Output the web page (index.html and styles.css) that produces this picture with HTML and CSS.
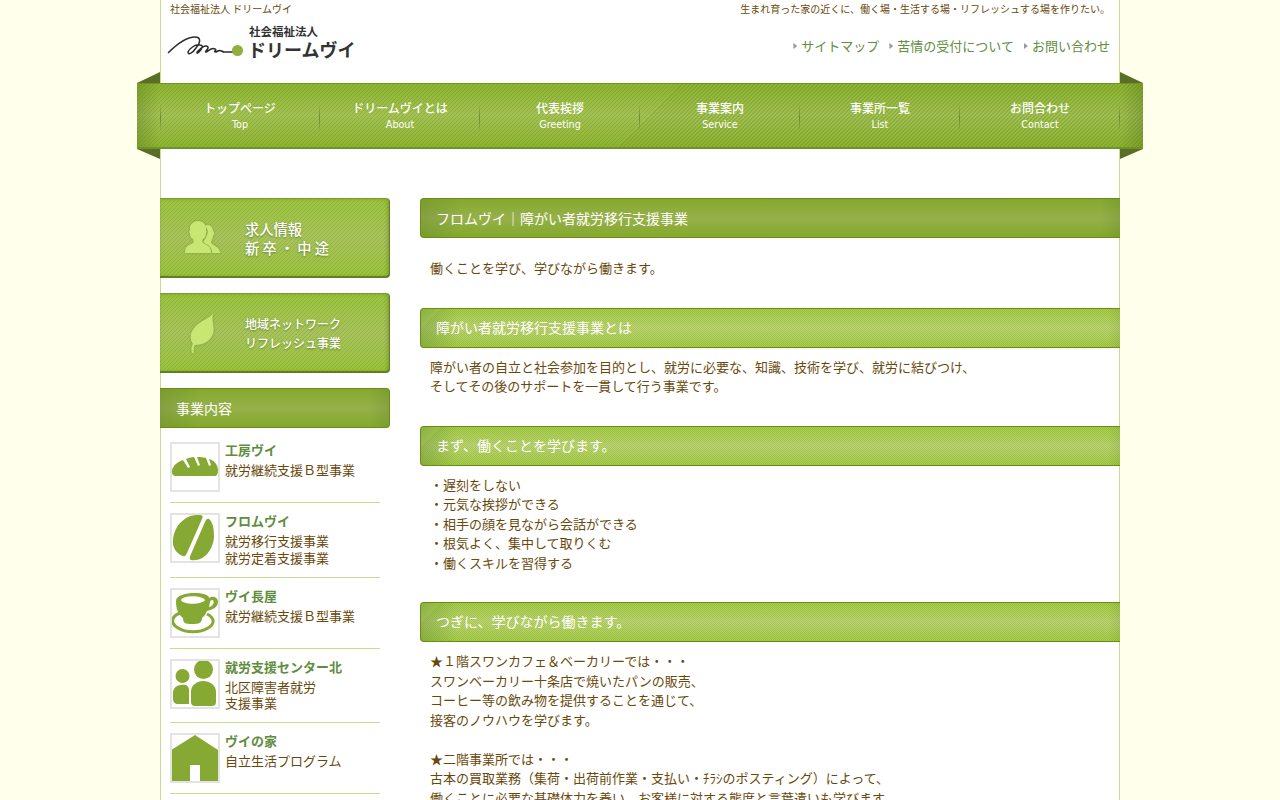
FILE: index.html
```html
<!DOCTYPE html>
<html lang="ja">
<head>
  <meta charset="UTF-8">
  <title>フロムヴイ｜社会福祉法人 ドリームヴイ</title>
  <meta name="viewport" content="width=device-width, initial-scale=1.0">
  <link rel="stylesheet" href="styles.css">
</head>
<body>
  <div class="wrapper">
    <header class="header">
      <div class="header-top">
        <h1>社会福祉法人 ドリームヴイ</h1>
        <p>生まれ育った家の近くに、働く場・生活する場・リフレッシュする場を作りたい。</p>
      </div>
      <div class="header-main">
        <a href="#" class="logo">
          <svg class="logo-mark" width="78" height="24" viewBox="0 0 78 24">
            <path d="M1 17C10 8 20 1 28 1c6 0 6 5 1 11c-4 6-8 7-8 4c1-3 7-8 12-7c4 0 2 4-1 7c-2 2-3 1-1-1c4-4 8-6 10-4c1 2-4 5-2 5c3-1 5-5 9-3c3 1-3 3 1 3c5-3 4-1 8 0h10" fill="none" stroke="#2b2b2b" stroke-width="1.5"/>
            <circle cx="70.500" cy="14.500" r="5.500" fill="#8db13c"/>
          </svg>
          <span class="logo-text">
            <small>社会福祉法人</small>
            <strong>ドリームヴイ</strong>
          </span>
        </a>
        <ul class="sub-nav">
          <li><a href="#">サイトマップ</a></li>
          <li><a href="#">苦情の受付について</a></li>
          <li><a href="#">お問い合わせ</a></li>
        </ul>
      </div>
    </header>

    <nav class="ribbon">
      <ul>
        <li><a href="#">トップページ<span>Top</span></a></li>
        <li><a href="#">ドリームヴイとは<span>About</span></a></li>
        <li><a href="#">代表挨拶<span>Greeting</span></a></li>
        <li><a href="#">事業案内<span>Service</span></a></li>
        <li><a href="#">事業所一覧<span>List</span></a></li>
        <li><a href="#">お問合わせ<span>Contact</span></a></li>
      </ul>
    </nav>

    <div class="columns">
      <aside class="side">
        <a href="#" class="banner">
          <svg width="36" height="34" viewBox="0 0 36 34">
            <path d="M20 5c2-2 8-1 8 5c2 1 1 4 0 5c0 3-2 4-2 6c0 3 8 4 9 10v1h-8c0-5-2-7-6-9c-3-1-3-3-1-5c3-4 4-9 0-13z"/>
            <path d="M0 32c0-6 2-7 6-9c3-1 3-3 2-5c-2-1-3-3-3-5c-1-2-1-3 0-4C4 4 8 0 13 0s9 4 8 9c1 1 0 3 0 4c0 2-1 4-3 5c-1 2-1 4 2 5c4 2 6 3 6 9z"/>
          </svg>
          <span class="banner-text">求人情報<br><span class="wide">新卒・中途</span></span>
        </a>
        <a href="#" class="banner">
          <svg width="36" height="42" viewBox="0 0 36 42">
            <path d="M28 1c-2 5-12 7-18 14c-6 6-5 13-2 17c-2 3-2 6-1 9h2c-1-3 0-6 1-8c7 0 14-3 17-9c4-7-1-14 1-23z"/>
          </svg>
          <span class="banner-text small">地域ネットワーク<br>リフレッシュ事業</span>
        </a>

        <h2 class="bar side-title">事業内容</h2>
        <ul class="services">
          <li>
            <svg class="icon" viewBox="0 0 46 46">
              <path d="M3 32c-4-1-4-6-1-10c2-3 6-5 9-6l5 8l2-1l-4-8c3-1 5-2 8-2l4 9l2-1l-3-8c3 0 6 0 9 1l3 8l2-1l-2-6c5 1 9 6 9 11c0 4-1 6-4 6z"/>
            </svg>
            <div><h3>工房ヴイ</h3><p>就労継続支援Ｂ型事業</p></div>
          </li>
          <li>
            <svg class="icon" viewBox="0 0 46 46">
              <path d="M28 0C12-1 2 12 1 25c-1 8 4 14 10 16c2 1 3-1 4-3L30 4c1-2 1-4-2-4zM37 4c-2-1-3 1-4 3L19 39c-1 2-2 5 0 6c12 2 22-9 23-23c0-8-1-15-5-18z"/>
            </svg>
            <div><h3>フロムヴイ</h3><p>就労移行支援事業<br>就労定着支援事業</p></div>
          </li>
          <li>
            <svg class="icon" viewBox="0 0 46 46">
              <path fill-rule="evenodd" d="M4 11C4 1 37 1 37 8c5-3 9 0 9 4c0 6-7 8-11 9c-1 3-3 5-5 7c0 5-3 6-10 6s-9-1-9-6c-5-4-7-9-7-17zm5-1c2 5 21 5 24 0c-3-5-22-5-24 0zm29 2l-1 5c5-1 6-7 3-7c-1 0-2 1-2 2z"/>
              <path d="M8 23C-2 27-1 34 6 38c8 5 22 5 30 0c7-4 7-10-1-14" fill="none" stroke="#86a934" stroke-width="3"/>
            </svg>
            <div><h3>ヴイ長屋</h3><p>就労継続支援Ｂ型事業</p></div>
          </li>
          <li>
            <svg class="icon" viewBox="0 0 46 46">
              <circle cx="10.500" cy="15" r="7"/>
              <circle cx="31.500" cy="8.500" r="9.500"/>
              <path d="M9 24c5-1 8 1 8 5v14H6c-3 0-5-2-5-5v-6c0-4 3-8 8-8zM31 20c7 0 13 4 13 11v10c0 3-2 4-4 4H23c-2 0-4-1-4-4V31c0-7 6-11 12-11z"/>
            </svg>
            <div><h3>就労支援センター北</h3><p>北区障害者就労<br>支援事業</p></div>
          </li>
          <li>
            <svg class="icon" viewBox="0 0 46 46">
              <path d="M23 0L46 15v31H28V30H18v16H-1V15z"/>
            </svg>
            <div><h3>ヴイの家</h3><p>自立生活プログラム</p></div>
          </li>
        </ul>
      </aside>

      <main class="main">
        <section class="intro">
          <h2 class="bar">フロムヴイ｜障がい者就労移行支援事業</h2>
          <p>働くことを学び、学びながら働きます。</p>
        </section>
        <section>
          <h3 class="bar light">障がい者就労移行支援事業とは</h3>
          <p>障がい者の自立と社会参加を目的とし、就労に必要な、知識、技術を学び、就労に結びつけ、<br>
          そしてその後のサポートを一貫して行う事業です。</p>
        </section>
        <section>
          <h3 class="bar light">まず、働くことを学びます。</h3>
          <p>・遅刻をしない<br>
          ・元気な挨拶ができる<br>
          ・相手の顔を見ながら会話ができる<br>
          ・根気よく、集中して取りくむ<br>
          ・働くスキルを習得する</p>
        </section>
        <section>
          <h3 class="bar light">つぎに、学びながら働きます。</h3>
          <p>★１階スワンカフェ＆ベーカリーでは・・・<br>
          スワンベーカリー十条店で焼いたパンの販売、<br>
          コーヒー等の飲み物を提供することを通じて、<br>
          接客のノウハウを学びます。<br>
          <br>
          ★二階事業所では・・・<br>
          古本の買取業務（集荷・出荷前作業・支払い・ﾁﾗｼのポスティング）によって、<br>
          働くことに必要な基礎体力を養い、お客様に対する態度と言葉遣いも学びます。</p>
        </section>
      </main>
    </div>
  </div>
</body>
</html>
```
FILE: styles.css
```css
* {
  margin: 0;
  padding: 0;
  box-sizing: border-box;
}

body {
  background: #ffffec;
  color: #69490b;
  font-family: 'Noto Sans CJK JP', sans-serif;
  font-size: 13px;
  line-height: 1.5;
}

ul {
  list-style: none;
}

a {
  color: #5f8d3e;
  text-decoration: none;
}

.wrapper {
  width: 960px;
  min-height: 800px;
  margin: 0 auto;
  background: #fff;
  box-shadow: inset 1px 0 #c8dc94, inset -1px 0 #c8dc94;
}

/* header */
.header {
  height: 83px;
  padding: 0 10px;
}

.header-top {
  display: flex;
  justify-content: space-between;
  height: 24px;
  padding-top: 1px;
  font-size: 10px;
}

.header-top h1 {
  font-size: 10px;
  font-weight: normal;
}

.header-main {
  display: flex;
  justify-content: space-between;
}

.logo {
  display: flex;
  margin-left: -3px;
  color: #333;
}

.logo-mark {
  margin-top: 12px;
}

.logo-text {
  display: flex;
  flex-direction: column;
  margin-left: 3px;
}

.logo-text small {
  font-size: 11.5px;
  font-weight: bold;
  line-height: 14px;
  margin-left: 1px;
}

.logo-text strong {
  font-size: 18px;
  line-height: 22px;
}

.sub-nav {
  display: flex;
  gap: 10px;
  padding-top: 12px;
}

.sub-nav li {
  display: flex;
  align-items: center;
  height: 20px;
}

.sub-nav li::before {
  content: "";
  width: 4px;
  height: 6px;
  margin-right: 4px;
  background: #9a9a9a;
  clip-path: polygon(0 0, 100% 50%, 0 100%);
}

/* ribbon navigation */
.ribbon {
  position: relative;
  height: 66px;
  margin: 0 -23px;
  padding: 0 23px;
  border-top: 1px solid #729423;
  border-bottom: 2px solid #70922b;
  background:
    linear-gradient(90deg, rgba(85, 115, 35, .35), transparent 22px, transparent calc(100% - 22px), rgba(85, 115, 35, .35)),
    repeating-linear-gradient(135deg, rgba(92, 128, 24, .28) 0 1.2px, transparent 1.2px 2.83px),
    linear-gradient(#8db42f, #a4c154 50%, #8db42f);
}

.ribbon::before,
.ribbon::after {
  content: "";
  position: absolute;
  top: -12px;
  width: 23px;
  height: 88px;
  background: #596f27;
}

.ribbon::before {
  left: 0;
  clip-path: polygon(0 11px, 100% 0, 100% 11px, 0 11px, 0 77px, 100% 77px, 100% 87px, 0 77px);
}

.ribbon::after {
  right: 0;
  clip-path: polygon(0 0, 100% 11px, 0 11px, 0 77px, 100% 77px, 0 87px, 0 77px, 0 11px);
}

.ribbon ul {
  display: flex;
  height: 100%;
}

.ribbon li {
  width: 160px;
  padding-top: 15px;
  text-align: center;
  background: linear-gradient(transparent, #6b8a2c 50%, transparent) right 20px / 1px 28px no-repeat;
}

.ribbon li:first-child {
  background:
    linear-gradient(transparent, #6b8a2c 50%, transparent) right 20px / 1px 28px no-repeat,
    linear-gradient(transparent, #6b8a2c 50%, transparent) left 20px / 1px 28px no-repeat;
}

.ribbon a {
  display: block;
  color: #fff;
  font-size: 12px;
  font-weight: 500;
  line-height: 18px;
}

.ribbon span {
  display: block;
  font-family: 'DejaVu Sans', sans-serif;
  font-size: 9.6px;
  line-height: 16px;
}

/* columns */
.columns {
  display: flex;
  gap: 30px;
  padding-top: 49px;
}

.bar {
  height: 40px;
  padding-left: 15px;
  border: 1px solid #6c8d13;
  border-right: 0;
  border-radius: 4px 0 0 4px;
  background:
    linear-gradient(90deg, rgba(95, 125, 45, .3), transparent 40px, transparent calc(100% - 20px), rgba(95, 125, 45, .25)),
    linear-gradient(#84a92e, #96b04a 50%, #83a92b);
  color: #fff;
  font-size: 14px;
  font-weight: normal;
  line-height: 38px;
}

.bar.light {
  line-height: 36px;
  background:
    linear-gradient(90deg, rgba(85, 130, 40, .35), transparent 36px, transparent calc(100% - 12px), rgba(85, 130, 40, .15)),
    repeating-linear-gradient(135deg, rgba(115, 155, 30, .28) 0 .7px, transparent .7px 1.415px),
    linear-gradient(#a5cd49, #bfd575 50%, #a5cd49);
}

/* sidebar */
.side {
  width: 230px;
}

.banner {
  display: flex;
  align-items: center;
  height: 80px;
  margin-bottom: 15px;
  padding-left: 25px;
  border-radius: 0 4px 4px 0;
  background:
    repeating-linear-gradient(135deg, rgba(110, 145, 45, .3) 0 1.2px, transparent 1.2px 2.83px),
    linear-gradient(#9bc43c, #a8c35c 50%, #99c339);
  box-shadow: inset -1px -2px 1px #617d20, inset 0 1px 1px #7b9b32, inset -2px 0 4px rgba(80, 110, 20, .45);
}

.banner svg {
  fill: #c8e673;
  filter: drop-shadow(0 0 1px #7d9d38);
}

.banner-text {
  margin-left: 24px;
  color: #fff;
  font-size: 14.25px;
  font-weight: 500;
  line-height: 19px;
  text-shadow: 0 1px 2px #6a8430;
}

.banner-text.small {
  font-size: 12px;
}

.wide {
  letter-spacing: 3.2px;
}

.side-title {
  border-left: 0;
  border-right: 1px solid #6c8d13;
  border-radius: 0 4px 4px 0;
  padding-left: 16px;
}

.services {
  padding: 4px 10px 0;
}

.services li {
  display: flex;
  gap: 5px;
  padding: 10px 0;
  border-bottom: 1px solid #c8dc94;
}

.icon {
  flex: none;
  width: 50px;
  height: 50px;
  border: 2px solid #e3e3e3;
  fill: #86a934;
}

.services h3 {
  margin-bottom: 3px;
  color: #5f8d3e;
  font-size: 13px;
  line-height: 1.3;
}

.services p {
  line-height: 1.3;
}

/* main */
.main {
  width: 700px;
}

.main section {
  margin-bottom: 30px;
}

.main p {
  padding: 9px 10px 0;
}

.main .intro p {
  padding-top: 20px;
}
```
